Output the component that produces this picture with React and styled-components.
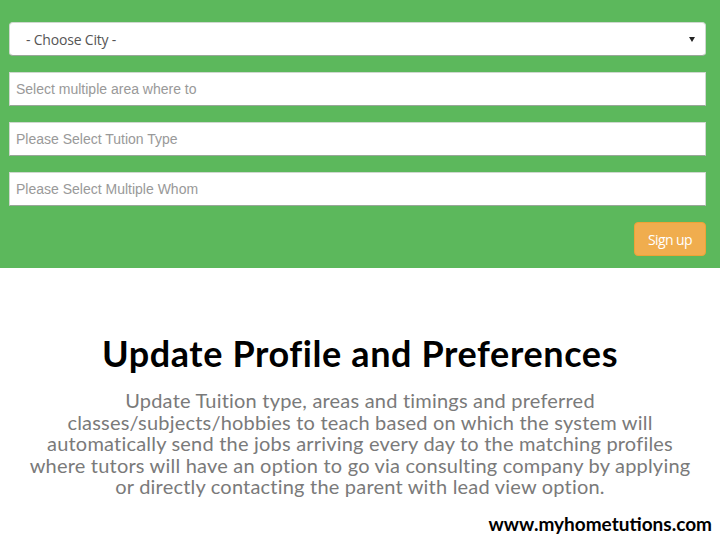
import React from "react";
import styled, { createGlobalStyle } from "styled-components";

const Global = createGlobalStyle`
  html, body { margin: 0; padding: 0; background: #ffffff; }
  body { width: 720px; height: 540px; overflow: hidden; }
`;

const Page = styled.div`
  width: 720px;
  height: 540px;
  display: flex;
  flex-direction: column;
  background: #ffffff;
`;

const FormPanel = styled.div`
  background: #5cb85c;
  height: 268px;
  box-sizing: border-box;
  padding: 22px 14px 0 9px;
  display: flex;
  flex-direction: column;
  gap: 16px;
`;

const Field = styled.div`
  height: 34px;
  box-sizing: border-box;
  background: #ffffff;
  border: 1px solid #cfd8cf;
  border-bottom-color: #9aa79a;
  border-radius: ${(p) => (p.$rounded ? "4px" : "0")};
  display: flex;
  align-items: center;
  padding-left: ${(p) => (p.$rounded ? "16px" : "6px")};
  padding-right: 8px;
  font-family: ${(p) => (p.$rounded ? '"Open Sans", sans-serif' : '"Liberation Sans", Arial, sans-serif')};
  font-size: 14px;
  color: ${(p) => (p.$rounded ? "#555555" : "#999999")};
  letter-spacing: ${(p) => (p.$rounded ? "-0.2px" : "0")};
`;

const FieldText = styled.span`
  flex: 1;
`;

const Caret = styled.span`
  width: 0;
  height: 0;
  border-left: 3px solid transparent;
  border-right: 3px solid transparent;
  border-top: 5px solid #222222;
  margin-right: 2px;
`;

const ButtonRow = styled.div`
  display: flex;
  justify-content: flex-end;
  margin-top: 0;
`;

const SignupButton = styled.button`
  width: 72px;
  height: 34px;
  background: #f0ad4e;
  border: 1px solid #eea236;
  border-radius: 4px;
  color: #ffffff;
  font-family: "Open Sans", sans-serif;
  font-size: 14px;
  letter-spacing: -0.6px;
  padding: 0;
`;

const Content = styled.div`
  flex: 1;
  display: flex;
  flex-direction: column;
  align-items: center;
  padding-top: 64px;
`;

const Title = styled.h1`
  margin: 0;
  font-family: Lato, "Open Sans", sans-serif;
  font-weight: 700;
  font-size: 36px;
  line-height: 42px;
  color: #000000;
  letter-spacing: 0.6px;
`;

const Body = styled.p`
  margin: 16px 0 0;
  font-family: Lato, "Open Sans", sans-serif;
  font-size: 20px;
  line-height: 21.5px;
  color: #7a7a7a;
  letter-spacing: 0.2px;
  text-align: center;
`;

const Footer = styled.div`
  align-self: flex-end;
  margin-top: auto;
  margin-bottom: 5px;
  margin-right: 8px;
  font-family: Lato, "Open Sans", sans-serif;
  font-weight: 700;
  font-size: 19px;
  color: #000000;
`;

export default function App() {
  return (
    <Page>
      <Global />
      <FormPanel>
        <Field $rounded>
          <FieldText>- Choose City -</FieldText>
          <Caret />
        </Field>
        <Field>
          <FieldText>Select multiple area where to</FieldText>
        </Field>
        <Field>
          <FieldText>Please Select Tution Type</FieldText>
        </Field>
        <Field>
          <FieldText>Please Select Multiple Whom</FieldText>
        </Field>
        <ButtonRow>
          <SignupButton>Sign up</SignupButton>
        </ButtonRow>
      </FormPanel>
      <Content>
        <Title>Update Profile and Preferences</Title>
        <Body>
          Update Tuition type, areas and timings and preferred
          <br />
          classes/subjects/hobbies to teach based on which the system will
          <br />
          automatically send the jobs arriving every day to the matching profiles
          <br />
          where tutors will have an option to go via consulting company by applying
          <br />
          or directly contacting the parent with lead view option.
        </Body>
        <Footer>www.myhometutions.com</Footer>
      </Content>
    </Page>
  );
}
